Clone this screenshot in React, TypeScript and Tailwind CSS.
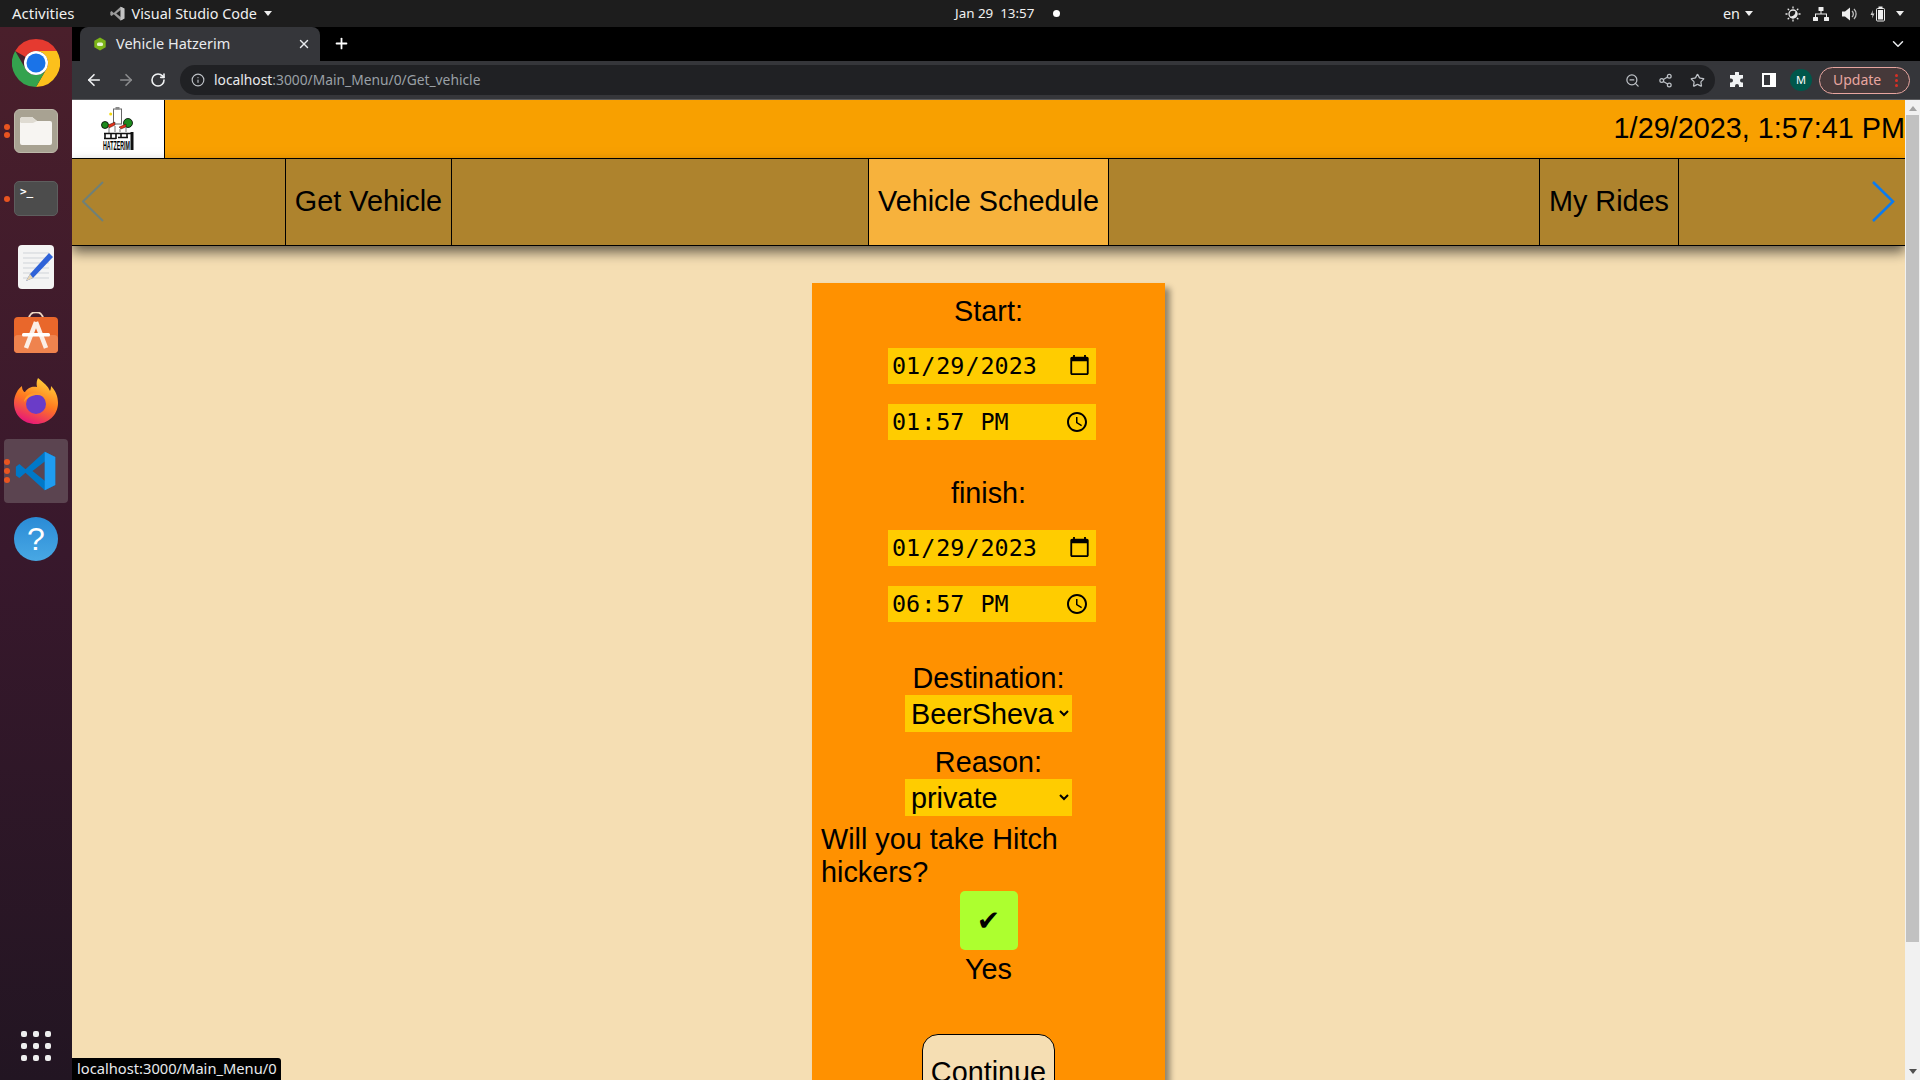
import React from "react";
import { ArrowLeft, ArrowRight, RotateCw, Info, ZoomOut, Share2, Star, X, Plus, ChevronDown } from "lucide-react";

const ui = "font-['Noto_Sans',sans-serif]";
const page = "font-['Liberation_Sans',Arial,sans-serif]";

function VSCode({ size = 48, mono = false }: { size?: number; mono?: boolean }) {
  return (
    <svg width={size} height={size} viewBox="0 0 48 48">
      <path d="M34 2 L46 8 V40 L34 46 L12 26 L5 32 L1 29 V19 L5 16 L12 22 Z M34 13 L20 24 L34 35 Z" fill={mono ? "#9a9a9a" : "#0078c8"} fillRule="evenodd" />
      <path d="M34 2 L46 8 V40 L34 46 Z" fill={mono ? "#c4c4c4" : "#1f9cf0"} />
    </svg>
  );
}

function Dock() {
  return (
    <div className="w-[72px] h-full shrink-0 flex flex-col items-center bg-gradient-to-b from-[#4a1f2b] via-[#38182c] to-[#221522] relative">
      <div className="mt-[12px] h-[48px] w-[48px]">
        <svg width="48" height="48" viewBox="0 0 48 48">
          <path d="M24 0 A24 24 0 0 1 44.8 12 H24 A12 12 0 0 0 13.6 18 L3.2 12 A24 24 0 0 1 24 0Z" fill="#e53a30" />
          <path d="M44.8 12 A24 24 0 0 1 24 48 L34.4 30 A12 12 0 0 0 24 12 Z" fill="#fcc01c" />
          <path d="M3.2 12 L13.6 30 A12 12 0 0 0 34.4 30 L24 48 A24 24 0 0 1 3.2 12Z" fill="#34a34e" />
          <circle cx="24" cy="24" r="12" fill="#fff" />
          <circle cx="24" cy="24" r="9.5" fill="#1a73e8" />
        </svg>
      </div>
      <div className="mt-[22px] h-[44px] w-[44px] rounded-[6px] bg-[#a8a292] border border-[#bdb8a9] flex items-center justify-center">
        <svg width="34" height="30" viewBox="0 0 34 30">
          <path d="M1 4 a3 3 0 0 1 3 -3 h9 l5 4 h13 a2 2 0 0 1 2 2 v20 a2 2 0 0 1 -2 2 h-28 a2 2 0 0 1 -2 -2 Z" fill="#f7f5f2" />
          <path d="M1 6 V4 a3 3 0 0 1 3 -3 h9 l5 4 l-4 2 h-12z" fill="#dfdbd2" />
        </svg>
      </div>
      <div className="mt-[28px] h-[35px] w-[44px] rounded-[5px] bg-[#4c4c4c] border border-[#5e5e5e] relative">
        <span className="absolute left-[5px] top-[1px] text-[11px] leading-[18px] font-bold text-white font-['DejaVu_Sans_Mono',monospace]">&gt;_</span>
      </div>
      <div className="mt-[29px] h-[44px] w-[36px] rounded-[4px] bg-[#f4f4f4] relative overflow-hidden">
        <svg width="36" height="44" viewBox="0 0 36 44">
          <path d="M5 8h26M5 13h26M5 18h26M5 23h26M5 28h26M5 33h26" stroke="#cfd3d8" strokeWidth="1" />
          <path d="M31 8 L12 29 L8 36 L15 33 L35 12Z" fill="#2f62d8" />
          <path d="M12 29 L8 36 L15 33Z" fill="#e9d5b0" />
        </svg>
      </div>
      <div className="mt-[23px] h-[42px] w-[44px]">
        <svg width="44" height="42" viewBox="0 0 44 42">
          <path d="M15 7 C15 -2 29 -2 29 7" fill="none" stroke="#f0d9c4" strokeWidth="2" />
          <rect x="0" y="5" width="44" height="36" rx="4" fill="#e9672b" />
          <rect x="0" y="23" width="44" height="18" rx="4" fill="#ef834e" />
          <path d="M22 10 L12 36 M22 10 L32 36" stroke="#fbeee6" strokeWidth="4.500" />
          <rect x="8" y="21" width="28" height="3.500" rx="1.500" fill="#fff" />
        </svg>
      </div>
      <div className="mt-[24px] h-[47px] w-[46px]">
        <svg width="46" height="47" viewBox="0 0 46 47">
          <defs>
            <linearGradient id="ff" x1="0.7" y1="0" x2="0.3" y2="1">
              <stop offset="0" stopColor="#ffd43a" />
              <stop offset="0.5" stopColor="#ff7a1f" />
              <stop offset="1" stopColor="#e5137d" />
            </linearGradient>
          </defs>
          <path d="M23 46 C10 46 1 37 1 25 C1 17 5 11 9 8 C9 12 11 14 12 14 C15 9 20 8 24 9 C23 5 24 2 25 0 C31 5 35 8 37 13 C38 11 38 9 38 8 C43 13 45 19 45 25 C45 37 35 46 23 46Z" fill="url(#ff)" />
          <circle cx="23" cy="26" r="10" fill="#6a3cc8" />
          <path d="M11 24 C12 14 27 11 34 20 C27 15 17 16 11 24Z" fill="#ff9a2a" />
        </svg>
      </div>
      <div className="mt-[14px] h-[64px] w-[64px] rounded-[4px] bg-[#5b4450] flex items-center justify-center relative">
        <VSCode size={42} />
        <div className="absolute left-0 top-[20px] flex flex-col gap-[3px]">
          <span className="w-[6px] h-[6px] rounded-full bg-[#e95420]" />
          <span className="w-[6px] h-[6px] rounded-full bg-[#e95420]" />
          <span className="w-[6px] h-[6px] rounded-full bg-[#e95420]" />
        </div>
      </div>
      <div className="mt-[14px] h-[44px] w-[44px] rounded-full bg-gradient-to-b from-[#2a8bd6] to-[#48a8e4] flex items-center justify-center text-white text-[32px] leading-none font-['Liberation_Sans',sans-serif]">?</div>
      <div className="absolute left-[21px] top-[1004px] grid grid-cols-3 gap-x-[6px] gap-y-[6px]">
        {Array.from({ length: 9 }).map((_, i) => (
          <span key={i} className="w-[6px] h-[6px] rounded-[2px] bg-[#eeeeee]" />
        ))}
      </div>
      <span className="absolute left-[4px] top-[97px] w-[6px] h-[6px] rounded-full bg-[#e95420]" />
      <span className="absolute left-[4px] top-[105px] w-[6px] h-[6px] rounded-full bg-[#e95420]" />
      <span className="absolute left-[4px] top-[169px] w-[6px] h-[6px] rounded-full bg-[#e95420]" />
    </div>
  );
}

function TopBar() {
  return (
    <div className={`h-[27px] bg-[#1d1d1d] shrink-0 flex items-center text-[#f0f0f0] relative ${ui}`}>
      <span className="ml-[12px] text-[15px] leading-[25px]">Activities</span>
      <span className="ml-[35px] flex items-center gap-[7px] text-[14.4px] leading-[25px]">
        <VSCode size={15} mono />
        <span>Visual Studio Code</span>
        <span className="w-0 h-0 border-x-[4.5px] border-x-transparent border-t-[5px] border-t-[#eeeeee]" />
      </span>
      <span className="absolute left-[955px] text-[13.4px] leading-[25px]">Jan 29&nbsp;&nbsp;13:57</span>
      <span className="absolute left-[1053px] w-[7px] h-[7px] rounded-full bg-white" />
      <div className="ml-auto mr-[16px] flex items-center">
        <span className="text-[14.4px] leading-[25px] mr-[5px]">en</span>
        <span className="w-0 h-0 border-x-[4.5px] border-x-transparent border-t-[5px] border-t-[#eeeeee] mr-[32px]" />
        <svg width="16" height="16" viewBox="0 0 16 16" className="mr-[12px]" fill="none" stroke="#e8e8e8" strokeWidth="1.3">
          <circle cx="8" cy="8" r="4" fill="#1d1d1d" />
          <path d="M5.500 11 A4 4 0 0 0 11 5.500 A5 5 0 0 1 5.500 11Z" fill="#e8e8e8" />
          <path d="M8 0.5v2M8 13.5v2M0.5 8h2M13.5 8h2M2.7 2.7l1.4 1.4M11.9 11.9l1.4 1.4M2.7 13.3l1.4-1.4M11.9 4.1l1.4-1.4" />
        </svg>
        <svg width="16" height="14" viewBox="0 0 16 14" className="mr-[13px]" fill="#eeeeee">
          <rect x="5.5" y="0" width="5" height="4" rx="0.5" />
          <rect x="0" y="10" width="5" height="4" rx="0.5" />
          <rect x="11" y="10" width="5" height="4" rx="0.5" />
          <path d="M7.500 4h1v2.500h5.500v3.500h-1v-2.500h-10v2.500h-1v-3.500h5.500z" />
        </svg>
        <svg width="16" height="14" viewBox="0 0 16 14" className="mr-[12px]">
          <path d="M0 4.500 H3 L8 0.500 V13.500 L3 9.500 H0Z" fill="#eeeeee" />
          <path d="M10 4 A4 4 0 0 1 10 10 M12 2 A7 7 0 0 1 12 12" fill="none" stroke="#bdbdbd" strokeWidth="1.300" />
        </svg>
        <svg width="16" height="16" viewBox="0 0 16 16" className="mr-[10px]">
          <path d="M3 4 L0.5 9 H2.500 L2 12.500 L4.500 7.500 H2.500Z" fill="#cfcfcf" />
          <rect x="6.500" y="2.500" width="8" height="12.500" rx="1" fill="#1d1d1d" stroke="#eeeeee" />
          <rect x="8" y="4" width="5" height="9.500" fill="#eeeeee" />
          <rect x="8.500" y="0.500" width="4" height="2" fill="#eeeeee" />
        </svg>
        <span className="w-0 h-0 border-x-[4.5px] border-x-transparent border-t-[5px] border-t-[#eeeeee]" />
      </div>
    </div>
  );
}

function Chrome() {
  return (
    <div className={`shrink-0 ${ui}`}>
      <div className="h-[34px] bg-black flex items-end relative">
        <div className="ml-[8px] w-[240px] h-[34px] bg-[#35363a] rounded-t-[8px] flex items-center text-[14.5px] text-[#e8eaed]">
          <svg width="14" height="14" viewBox="0 0 14 14" className="ml-[13px]">
            <path d="M7 0.500 L12.700 3.700 V10.300 L7 13.500 L1.300 10.300 V3.700Z" fill="#7cb518" />
            <rect x="4" y="5.500" width="6" height="3.500" rx="1.500" fill="#e8f5d0" />
          </svg>
          <span className="ml-[9px] leading-[32px] pb-[2px]">Vehicle Hatzerim</span>
          <X size={14} strokeWidth={2.5} className="ml-auto mr-[9px] text-[#e8eaed]" />
        </div>
        <Plus size={17} strokeWidth={2.5} className="ml-[13px] mb-[9px] text-white" />
        <ChevronDown size={18} strokeWidth={2} className="ml-auto mr-[13px] mb-[8px] text-[#e8eaed]" />
      </div>
      <div className="h-[38px] bg-[#35363a] flex items-center border-b border-[#5c5d60] box-content">
        <ArrowLeft size={18} strokeWidth={2.200} className="ml-[13px] text-[#f1f3f4]" />
        <ArrowRight size={18} strokeWidth={2.200} className="ml-[14px] text-[#8b8c8e]" />
        <RotateCw size={16} strokeWidth={2.400} className="ml-[15px] text-[#f1f3f4]" />
        <div className="ml-[14px] h-[30px] w-[1535px] rounded-full bg-[#202124] flex items-center text-[13.8px]">
          <Info size={14} className="ml-[11px] text-[#bdc1c6]" />
          <span className="ml-[9px] text-[#e8eaed]">localhost</span>
          <span className="text-[#9aa0a6]">:3000/Main_Menu/0/Get_vehicle</span>
          <ZoomOut size={15} className="ml-auto text-[#bdc1c6]" />
          <Share2 size={15} className="ml-[18px] text-[#bdc1c6]" />
          <Star size={15} className="ml-[17px] mr-[10px] text-[#bdc1c6]" />
        </div>
        <svg width="16" height="16" viewBox="0 0 16 16" className="ml-[14px]" fill="#f1f3f4">
          <path d="M6 1 a2 2 0 0 1 4 0 V3 H14 V6.500 H13 a2 2 0 0 0 0 4 H14 V15 H10 V14 a2 2 0 0 0 -4 0 V15 H1 V10.500 H2 a2 2 0 0 0 0 -4 H1 V3 H6Z" />
        </svg>
        <svg width="14" height="14" viewBox="0 0 14 14" className="ml-[17px]">
          <rect x="0" y="0" width="14" height="14" fill="#fff" />
          <rect x="2" y="2" width="6" height="10" fill="#35363a" />
        </svg>
        <span className="ml-[14px] w-[22px] h-[22px] rounded-full bg-[#00574b] text-white text-[11px] flex items-center justify-center">M</span>
        <div className="ml-[7px] w-[91px] h-[27px] rounded-full border border-[#e8a6a0] bg-[#46393a] flex items-center text-[14px] text-[#e8a6a0]">
          <span className="ml-[13px] pb-[2px]">Update</span>
          <span className="ml-auto mr-[11px] flex flex-col gap-[2px]">
            <span className="w-[3px] h-[3px] rounded-full bg-[#d93025]" />
            <span className="w-[3px] h-[3px] rounded-full bg-[#d93025]" />
            <span className="w-[3px] h-[3px] rounded-full bg-[#d93025]" />
          </span>
        </div>
      </div>
    </div>
  );
}

function Logo() {
  return (
    <svg width="36" height="44" viewBox="0 0 36 44">
      <circle cx="10.700" cy="7" r="1.500" fill="#f5d90a" />
      <rect x="13.500" y="2" width="8" height="15" fill="#fff" stroke="#666" strokeWidth="1" />
      <rect x="15.500" y="0" width="4" height="2.500" fill="#888" />
      <circle cx="5" cy="18" r="3.500" fill="#1d8a1d" stroke="#000" strokeWidth="0.800" />
      <circle cx="28" cy="16" r="4.500" fill="#1d8a1d" stroke="#000" strokeWidth="0.800" />
      <path d="M8 18 L15 15 L15 18 L9 21Z" fill="#e2321a" stroke="#000" strokeWidth="0.400" />
      <path d="M19 20 L26 17 L26 20 L21 22Z" fill="#e2321a" stroke="#000" strokeWidth="0.400" />
      <path d="M9 21 v5 M15 19 v6 M20 22 v3 M26 21 v4" stroke="#777" strokeWidth="1" fill="none" />
      <path d="M4 26.500 h28 M4 31.500 h12 M18 30.500 h10 M5 26 v6 M11 26 v5 M16 26 v6 M21 26 v5 M27 26 v5" stroke="#111" strokeWidth="1.600" fill="none" />
      <rect x="30.500" y="25" width="3" height="18" fill="#111" />
      <text x="3" y="43" fontSize="12" fontWeight="700" fill="#000" fontFamily="Liberation Sans Narrow, Liberation Sans, sans-serif" textLength="27" lengthAdjust="spacingAndGlyphs">HATZERIM</text>
    </svg>
  );
}

function Header() {
  return (
    <div className={`shrink-0 relative ${page} text-black`}>
      <div className="h-[59px] bg-[#f8a000] flex items-stretch border-b border-black">
        <div className="w-[93px] bg-white border-r border-black flex items-center justify-center">
          <Logo />
        </div>
        <span className="ml-auto text-[28.8px] leading-[56px]">1/29/2023, 1:57:41 PM</span>
      </div>
      <div className="h-[87px] bg-[#ae832d] border-b border-black flex items-stretch relative shadow-[0_6px_12px_rgba(0,0,0,0.6)] text-[28.8px]">
        <div className="ml-[213px] w-[167px] border-x border-black flex items-center justify-center">Get Vehicle</div>
        <div className="ml-[416px] w-[241px] border-x border-black bg-[#f7b23c] flex items-center justify-center">Vehicle Schedule</div>
        <div className="ml-[430px] w-[140px] border-x border-black flex items-center justify-center">My Rides</div>
        <svg width="24" height="42" viewBox="0 0 24 42" className="absolute left-[10px] top-[22px]" fill="none" stroke="#6f8078" strokeWidth="2">
          <path d="M21 1 L1 20.500 L21 40" />
        </svg>
        <svg width="24" height="42" viewBox="0 0 24 42" className="absolute right-[10px] top-[22px]" fill="none" stroke="#0a7bf0" strokeWidth="2.500">
          <path d="M2 1 L22 20.500 L2 40" />
        </svg>
      </div>
    </div>
  );
}

function Form() {
  const field = "block w-[208px] h-[36px] ml-[7px] bg-[#ffcc00] text-black text-[23.4px] pl-[3px] pr-[3px] font-['DejaVu_Sans_Mono',monospace]";
  const select = "block w-[167px] h-[37px] bg-[#ffcc00] text-black text-[28.8px] pl-[2px] font-['Liberation_Sans',sans-serif]";
  return (
    <div className={`w-[353px] mx-auto mt-[37px] bg-[#ff9100] shadow-[5px_5px_6px_rgba(0,0,0,0.4)] flex flex-col items-center text-[28.8px] leading-[33px] text-black pt-[12px] pb-[40px] ${page}`}>
      <div>Start:</div>
      <input type="date" defaultValue="2023-01-29" className={`${field} mt-[20px]`} />
      <input type="time" defaultValue="13:57" className={`${field} mt-[20px]`} />
      <div className="mt-[37px]">finish:</div>
      <input type="date" defaultValue="2023-01-29" className={`${field} mt-[20px]`} />
      <input type="time" defaultValue="18:57" className={`${field} mt-[20px]`} />
      <div className="mt-[40px]">Destination:</div>
      <select defaultValue="BeerSheva" className={select}>
        <option>BeerSheva</option>
      </select>
      <div className="mt-[14px]">Reason:</div>
      <select defaultValue="private" className={select}>
        <option>private</option>
      </select>
      <div className="self-start ml-[9px] mt-[7px] w-[290px]">Will you take Hitch hickers?</div>
      <div className="mt-[2px] w-[58px] h-[59px] rounded-[5px] bg-[#adff2f] flex items-center justify-center font-['DejaVu_Sans',sans-serif] text-[28px] leading-none">✔</div>
      <div className="mt-[3px]">Yes</div>
      <button className="mt-[48px] w-[133px] h-[70px] rounded-[16px] border border-black bg-[#f5deb3] text-[28.8px] pt-[7px]">Continue</button>
    </div>
  );
}

export default function App() {
  return (
    <div className="w-[1920px] h-[1080px] overflow-hidden flex flex-col bg-[#1d1d1d]">
      <TopBar />
      <div className="flex-1 flex min-h-0 relative">
        <Dock />
        <div className="flex-1 flex flex-col min-w-0">
          <Chrome />
          <div className="flex-1 flex min-h-0">
            <div className="flex-1 min-w-0 bg-[#f5deb3] flex flex-col overflow-hidden">
              <Header />
              <div className="flex-1 min-h-0 overflow-hidden">
                <Form />
              </div>
            </div>
            <div className="w-[15px] bg-[#f1f1f1] flex flex-col items-center shrink-0">
              <span className="mt-[6px] w-0 h-0 border-x-[4px] border-x-transparent border-b-[5px] border-b-[#a3a3a3]" />
              <div className="mt-[4px] w-[13px] h-[827px] bg-[#c1c1c1]" />
              <span className="mt-auto mb-[6px] w-0 h-0 border-x-[4px] border-x-transparent border-t-[5px] border-t-[#505050]" />
            </div>
          </div>
        </div>
        <div className={`absolute left-[72px] bottom-0 h-[22px] w-[209px] bg-black text-[14.7px] leading-[20px] text-[#e8eaed] pl-[5px] rounded-tr-[3px] whitespace-nowrap ${ui}`}>localhost:3000/Main_Menu/0</div>
      </div>
    </div>
  );
}
